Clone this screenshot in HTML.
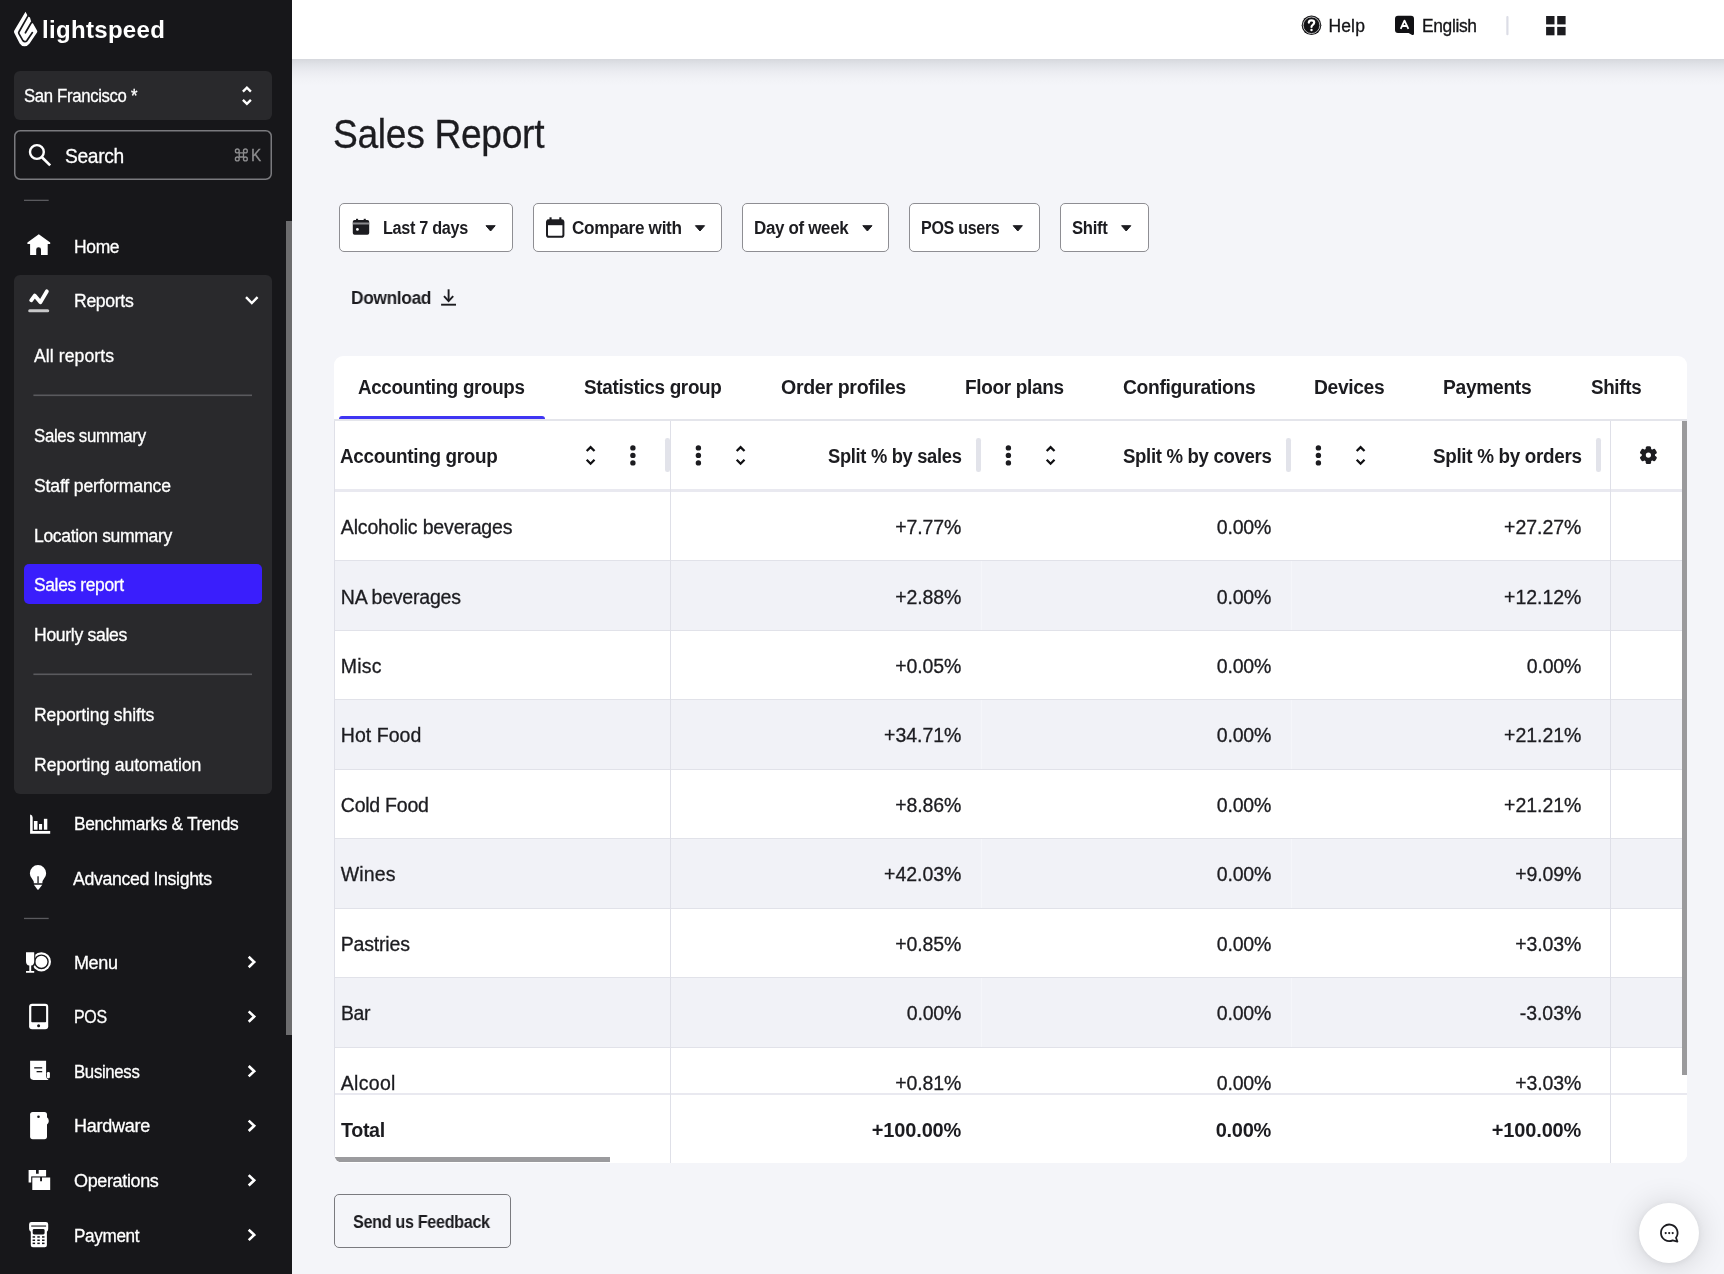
<!DOCTYPE html>
<html lang="en"><head><meta charset="utf-8"><title>Sales Report</title>
<style>
*{box-sizing:border-box;margin:0;padding:0}
html,body{width:1724px;height:1274px;overflow:hidden}
body{position:relative;background:#f4f5f9;font-family:"Liberation Sans",sans-serif;color:#1c1c20}
.a{position:absolute}
.t{position:absolute;transform-origin:0 50%;-webkit-text-stroke:0.3px currentColor;white-space:nowrap;line-height:24px;color:#fff;font-family:"Liberation Sans",sans-serif}
svg{position:absolute;overflow:visible}
#side{left:0;top:0;width:292px;height:1274px;background:#17171a}
.panel{background:#29292c;border-radius:6px}
.hr{height:1px;background:#56565b}
#topbar{left:292px;top:0;width:1432px;height:59px;background:#fff}
#topshadow{left:292px;top:59px;width:1432px;height:26px;background:linear-gradient(#d6d8dd,#e1e3e8 22%,#ebecf1 48%,#f1f2f6 75%,#f4f5f9)}
.btn{background:#fff;border:1px solid #8e8e93;border-radius:5px}
#card{left:334px;top:356px;width:1353px;height:807px;background:#fff;border-radius:9px;overflow:hidden}
.row{left:1px;width:1348px;height:70px;border-bottom:1px solid #e1e2e9}
.alt{background-color:#f1f2f7;background-image:linear-gradient(#f5f6fa,#f5f6fa),linear-gradient(#f5f6fa,#f5f6fa);background-size:1px 100%,1px 100%;background-position:646px 0,956px 0;background-repeat:no-repeat}
.vl{width:1px;background:#dfe0e8}
.rh{width:4.6px;height:34px;top:82.2px;background:#e2e3ea;border-radius:2.3px}
#texts{will-change:transform}

</style></head>
<body>
<div id="side" class="a">
  <div class="a panel" style="left:14px;top:71px;width:258px;height:49px"></div>
    <div class="a panel" style="left:14px;top:275px;width:258px;height:519px"></div>
  <div class="a" style="left:24px;top:564px;width:238px;height:40px;background:#3a1efc;border-radius:5px"></div>
  <div class="a" style="left:286px;top:221px;width:6px;height:814px;background:#6c6c6e"></div>
</div>
<div id="topshadow" class="a"></div>
<div id="topbar" class="a"></div>

<div class="a btn" style="left:339px;top:203px;width:174px;height:49px"></div>
<div class="a btn" style="left:533px;top:203px;width:189px;height:49px"></div>
<div class="a btn" style="left:742px;top:203px;width:147px;height:49px"></div>
<div class="a btn" style="left:909px;top:203px;width:131px;height:49px"></div>
<div class="a btn" style="left:1060px;top:203px;width:88.5px;height:49px"></div>

<div id="card" class="a">
  <!-- tab bar bottom border -->
  <div class="a" style="left:0;top:63px;width:1353px;height:2px;background:#e4e5eb"></div>
  <div class="a" style="left:5px;top:59.7px;width:206px;height:3.3px;background:#3f35f3;border-radius:3px 3px 0 0"></div>
  <!-- rows -->
  <div class="a row" style="top:136px;height:69px"></div>
  <div class="a row alt" style="top:205px;height:70px"></div>
  <div class="a row" style="top:275px;height:69px"></div>
  <div class="a row alt" style="top:344px;height:70px"></div>
  <div class="a row" style="top:414px;height:69px"></div>
  <div class="a row alt" style="top:483px;height:70px"></div>
  <div class="a row" style="top:553px;height:69px"></div>
  <div class="a row alt" style="top:622px;height:70px"></div>
  <div class="a row" style="top:692px;height:46px;border-bottom:none"></div>
  <!-- header bottom band -->
  <div class="a" style="left:0;top:133px;width:1349px;height:3px;background:#e9e9f0"></div>
  <!-- total row top border -->
  <div class="a" style="left:0;top:737px;width:1353px;height:2px;background:#e9e9f0"></div>
  <div class="a" style="left:0;top:739px;width:1353px;height:68px;background:#fff"></div>
  <!-- vertical lines -->
  <div class="a vl" style="left:0;top:65px;height:742px"></div>
  <div class="a vl" style="left:336px;top:65px;height:742px"></div>
  <div class="a vl" style="left:1276px;top:65px;height:742px"></div>
  <!-- resize handles -->
  <div class="a rh" style="left:331.2px"></div>
  <div class="a rh" style="left:642.2px"></div>
  <div class="a rh" style="left:952.2px"></div>
  <div class="a rh" style="left:1262.2px"></div>
  <!-- scrollbars -->
  <div class="a" style="left:1348px;top:65px;width:5px;height:654px;background:#9a9a9c"></div>
  <div class="a" style="left:1px;top:801.4px;width:275px;height:5px;background:#9b9b9e"></div>
</div>

<div class="a" style="left:334px;top:1194px;width:176.5px;height:54px;border:1px solid #7a7a7f;border-radius:5px"></div>
<div class="a" style="left:1639px;top:1203px;width:60px;height:60px;border-radius:30px;background:#fff;box-shadow:0 1px 6px 0 rgba(0,0,0,.06),0 2px 32px 0 rgba(0,0,0,.16)"></div>

<svg class="a" style="left:0;top:0" width="1724" height="1274" viewBox="0 0 1724 1274">
<!-- ===== logo flame ===== -->
<g id="flame">
<path fill="#fff" d="M25.5 11.7 L27.9 16.3 L30 17.6 L31.4 22.6 L33.2 23.8 L37 30.4 Q37.7 31.4 37 32.5 L29.6 43.6 Q27.7 46.3 24.5 46.3 Q21.3 46.3 19.7 43.6 L14.2 32.7 Q13.7 31.5 14.3 30.4 Z"/>
<path fill="none" stroke="#17171a" stroke-width="1.7" stroke-linecap="round" stroke-linejoin="round" d="M28.3 15.4 L18.9 32 Q18.4 32.8 18.9 33.6 L22.9 40.6 Q24.9 42.8 27 40.6 L32.4 32.6"/>
<path fill="none" stroke="#17171a" stroke-width="1.7" stroke-linecap="round" d="M31.5 22.3 L25.4 32.8"/>
</g>
<!-- dividers -->
<g fill="#5a5a5e">
<rect x="24" y="199.7" width="24.7" height="1.3"/>
<rect x="33.4" y="394.5" width="218.6" height="1.6"/>
<rect x="33.4" y="673.5" width="218.6" height="1.6"/>
<rect x="24" y="917.8" width="24.7" height="1.3"/>
</g>
<!-- ===== location up/down chevrons ===== -->
<g fill="none" stroke="#fff" stroke-width="2.4" stroke-linejoin="miter">
<path d="M242.9 91.6 L246.9 87.7 L250.9 91.6"/>
<path d="M242.9 99.9 L246.9 103.8 L250.9 99.9"/>
</g>
<!-- ===== search magnifier ===== -->
<rect x="14.75" y="130.75" width="256.5" height="48.5" rx="5.5" fill="none" stroke="#7a7a7e" stroke-width="1.5"/>
<g fill="none" stroke="#fff">
<circle cx="36.9" cy="152" r="6.9" stroke-width="2.4"/>
<path d="M41.9 157.3 L50.2 165.4" stroke-width="2.7"/>
</g>
<!-- command symbol -->
<g fill="none" stroke="#8e8e90" stroke-width="1.35">
<path d="M239.2 152.8 h4.3 v4.2 h-4.3 z"/>
<circle cx="237.3" cy="150.9" r="1.9"/><circle cx="245.4" cy="150.9" r="1.9"/><circle cx="237.3" cy="158.9" r="1.9"/><circle cx="245.4" cy="158.9" r="1.9"/>
</g>
<!-- ===== home ===== -->
<path fill="#fff" d="M38.8 234.2 L50.2 242.6 L50.2 244 L47.7 244 L47.7 254.9 L41 254.9 L41 249.6 a2.4 2.4 0 0 0 -4.8 0 L36.2 254.9 L30.1 254.9 L30.1 244 L27.4 244 L27.4 242.6 Z"/>
<!-- ===== reports ===== -->
<path fill="none" stroke="#fff" stroke-width="3.8" stroke-linecap="round" stroke-linejoin="round" d="M31.2 300.3 L34.7 295.6 L40.4 302.2 L46.9 291.3"/>
<rect x="28.2" y="309.2" width="21" height="3.1" rx="1.5" fill="#c8c8c9"/>
<path fill="none" stroke="#fff" stroke-width="2.4" d="M246 297.2 L251.8 303 L257.6 297.2"/>
<!-- ===== benchmarks ===== -->
<g fill="#fff">
<path d="M30.1 814.6 Q32.7 815 32.7 817.6 L32.7 830.9 L50.2 830.9 L50.2 833.7 L30.1 833.7 Z"/>
<rect x="33.9" y="821" width="3.6" height="8.7"/>
<rect x="39" y="824" width="3.1" height="5.7"/>
<rect x="43.9" y="818.8" width="3.4" height="10.9"/>
</g>
<!-- ===== bulb ===== -->
<g>
<path fill="#fff" d="M33.8 883.2 L33.8 881.8 Q33.4 880.6 32.2 879 A8.15 8.15 0 1 1 43.8 879 Q42.6 880.6 42.4 881.8 L42.4 883.2 Z"/>
<path fill="#fff" d="M33.9 884.8 L42.3 884.8 L38.6 889.5 Q38 890 37.4 889.5 Z"/>
<rect x="37.4" y="876.3" width="1.3" height="7" fill="#17171a"/>
</g>
<!-- ===== chevrons right ===== -->
<g fill="none" stroke="#fff" stroke-width="2.6">
<path d="M248.7 956.8 L254.2 962.0 L248.7 967.2"/>
<path d="M248.7 1011.4 L254.2 1016.6 L248.7 1021.8"/>
<path d="M248.7 1066.0 L254.2 1071.2 L248.7 1076.4"/>
<path d="M248.7 1120.6 L254.2 1125.8 L248.7 1131.0"/>
<path d="M248.7 1175.1 L254.2 1180.3 L248.7 1185.5"/>
<path d="M248.7 1229.7 L254.2 1234.9 L248.7 1240.1"/>
</g>
<!-- ===== menu (glass + plate) ===== -->
<g>
<circle cx="41.4" cy="961.8" r="9.6" fill="#fff"/>
<circle cx="41.4" cy="961.8" r="6.7" fill="none" stroke="#17171a" stroke-width="1.4"/>
<path fill="#17171a" d="M25 950 H35.3 V962 Q35.3 966.5 32 967.6 V974 H25 Z"/>
<path fill="#fff" d="M26 952.3 H34.2 V961.2 Q34.2 965.2 31.2 965.5 V971 H34.2 V972.8 H26 V971 H29.3 V965.5 Q26 965.2 26 961.2 Z"/>
</g>
<!-- ===== POS tablet ===== -->
<g>
<rect x="29.1" y="1003.8" width="19.1" height="25.4" rx="3" fill="#fff"/>
<rect x="31.3" y="1006" width="14.8" height="16.2" rx="0.8" fill="#17171a"/>
<circle cx="38.6" cy="1025.8" r="1.5" fill="#17171a"/>
</g>
<!-- ===== business ===== -->
<g>
<path fill="#fff" d="M30.1 1060.8 H46.1 V1076 Q46.1 1079 48.6 1079.9 H33.4 Q30.1 1079.9 30.1 1076.6 Z"/>
<rect x="46.9" y="1072" width="3" height="6.3" rx="1.2" fill="#fff"/>
<rect x="34.2" y="1067.2" width="8" height="1.3" fill="#17171a"/>
<rect x="36.6" y="1071" width="5.6" height="1.3" fill="#17171a"/>
</g>
<!-- ===== hardware ===== -->
<g>
<rect x="30.1" y="1112" width="16.9" height="27.2" rx="2.6" fill="#fff"/>
<path fill="#fff" d="M46.8 1117 Q48.8 1118.4 48.8 1121 Q48.8 1123.4 46.8 1124.8 Z"/>
<circle cx="38.5" cy="1116.8" r="1.3" fill="#17171a"/>
</g>
<!-- ===== operations ===== -->
<g>
<path fill="#fff" d="M28.6 1170.1 H36 V1173.8 H38.7 V1170.1 H46.1 V1182.4 H28.6 Z"/>
<rect x="31.2" y="1176.4" width="20.1" height="14.6" fill="#17171a"/>
<path fill="#fff" d="M32.3 1177.5 H40.1 V1181.3 H42 V1177.5 H50.2 V1189.9 H32.3 Z"/>
</g>
<!-- ===== payment ===== -->
<g>
<path fill="#fff" d="M31.4 1221.9 H45.9 Q48.2 1221.9 48.2 1224.2 V1229 Q48.2 1230.6 46.9 1231.8 V1245.2 Q46.9 1247.3 44.8 1247.3 H32.9 Q30.8 1247.3 30.8 1245.2 V1231.8 Q29.1 1230.6 29.1 1229 V1224.2 Q29.1 1221.9 31.4 1221.9 Z"/>
<rect x="31.2" y="1225.5" width="14.9" height="1.1" fill="#17171a"/>
<rect x="32.7" y="1229" width="11.9" height="5.4" rx="1.4" fill="#17171a"/>
<g fill="#17171a">
<rect x="32.6" y="1236.2" width="2.5" height="1.5"/><rect x="37.3" y="1236.2" width="2.5" height="1.5"/><rect x="42" y="1236.2" width="2.5" height="1.5"/>
<rect x="32.6" y="1239.5" width="2.5" height="1.5"/><rect x="37.3" y="1239.5" width="2.5" height="1.5"/><rect x="42" y="1239.5" width="2.5" height="1.5"/>
<rect x="32.6" y="1242.6" width="2.5" height="1.5"/><rect x="37.3" y="1242.6" width="2.5" height="1.5"/><rect x="42" y="1242.6" width="2.5" height="1.5"/>
</g>
</g>
<!-- ===== topbar: help ===== -->
<g>
<circle cx="1311.5" cy="25.3" r="9.8" fill="#111114"/>
<circle cx="1311.5" cy="25.3" r="8.3" fill="none" stroke="#fff" stroke-width="0.7"/>
<path fill="none" stroke="#fff" stroke-width="2.2" stroke-linecap="round" d="M1308.8 22.6 Q1308.9 20.3 1311.5 20.3 Q1314.2 20.3 1314.2 22.5 Q1314.2 23.9 1312.8 24.8 Q1311.5 25.7 1311.5 27"/>
<circle cx="1311.5" cy="30" r="1.2" fill="#fff"/>
</g>
<!-- ===== topbar: language ===== -->
<g>
<path fill="#111114" d="M1398 15.8 H1411 Q1414 15.8 1414 18.8 V33.4 Q1414 35.6 1412.2 34.9 L1408.6 33 H1398 Q1395 33 1395 30 V18.8 Q1395 15.8 1398 15.8 Z"/>
<path fill="none" stroke="#fff" stroke-width="1.8" stroke-linejoin="round" d="M1400.7 28.8 L1404.5 20.6 L1408.4 28.8 M1402 26 H1407"/>
</g>
<rect x="1506.3" y="16" width="2.2" height="19.2" rx="1" fill="#dcdde6"/>
<g fill="#1c1c20">
<rect x="1546.1" y="16" width="8.4" height="8.4"/><rect x="1557.2" y="16" width="8.4" height="8.4"/>
<rect x="1546.1" y="26.9" width="8.4" height="8.4"/><rect x="1557.2" y="26.9" width="8.4" height="8.4"/>
</g>
<!-- ===== filter: calendar filled ===== -->
<g>
<rect x="352.8" y="220" width="16.4" height="14.7" rx="1.8" fill="#1c1c20"/>
<rect x="356" y="218.8" width="2.1" height="3" fill="#1c1c20"/><rect x="363.7" y="218.8" width="2.1" height="3" fill="#1c1c20"/>
<rect x="352.8" y="222.5" width="16.4" height="2" fill="#8a8a8e"/>
<circle cx="357.4" cy="229.4" r="1.4" fill="#fff"/>
</g>
<!-- ===== filter: calendar outline ===== -->
<g>
<rect x="547" y="220.4" width="16.4" height="16.3" rx="1.8" fill="none" stroke="#1c1c20" stroke-width="2"/>
<rect x="547" y="219.6" width="16.4" height="5.6" fill="#1c1c20"/>
<rect x="549.5" y="217.3" width="2.1" height="4" fill="#1c1c20"/><rect x="559.3" y="217.3" width="2.1" height="4" fill="#1c1c20"/>
</g>
<!-- carets -->
<g fill="#1c1c20" stroke="#1c1c20" stroke-width="1" stroke-linejoin="round">
<path d="M486 225.7 H495.2 L490.6 231 Z"/>
<path d="M695.4 225.7 H704.6 L700 231 Z"/>
<path d="M862.8 225.7 H872 L867.4 231 Z"/>
<path d="M1013.2 225.7 H1022.4 L1017.8 231 Z"/>
<path d="M1121.6 225.7 H1130.8 L1126.2 231 Z"/>
</g>
<!-- download -->
<g fill="none" stroke="#1c1c20" stroke-width="1.9">
<path d="M441.1 304.7 H456"/>
<path d="M448.6 289.3 V301"/>
<path d="M444 296.2 L448.6 301.2 L453.2 296.2"/>
</g>
<!-- ===== table header icons ===== -->
<g fill="none" stroke="#111114" stroke-width="2.3">
<path d="M586.7 451 L590.6 447.1 L594.5 451 M586.7 459.8 L590.6 463.7 L594.5 459.8"/>
<path d="M736.7 451 L740.6 447.1 L744.5 451 M736.7 459.8 L740.6 463.7 L744.5 459.8"/>
<path d="M1046.7 451 L1050.6 447.1 L1054.5 451 M1046.7 459.8 L1050.6 463.7 L1054.5 459.8"/>
<path d="M1356.7 451 L1360.6 447.1 L1364.5 451 M1356.7 459.8 L1360.6 463.7 L1364.5 459.8"/>
</g>
<g fill="#1c1c20">
<circle cx="632.9" cy="447.9" r="2.7"/><circle cx="632.9" cy="455.4" r="2.7"/><circle cx="632.9" cy="462.9" r="2.7"/>
<circle cx="698.4" cy="447.9" r="2.7"/><circle cx="698.4" cy="455.4" r="2.7"/><circle cx="698.4" cy="462.9" r="2.7"/>
<circle cx="1008.4" cy="447.9" r="2.7"/><circle cx="1008.4" cy="455.4" r="2.7"/><circle cx="1008.4" cy="462.9" r="2.7"/>
<circle cx="1318.4" cy="447.9" r="2.7"/><circle cx="1318.4" cy="455.4" r="2.7"/><circle cx="1318.4" cy="462.9" r="2.7"/>
</g>
<!-- gear -->
<g transform="translate(1648.4 455.1)">
<g fill="#1c1c20">
<circle r="6.7"/>
<rect x="-2.7" y="-8.8" width="5.4" height="17.6" rx="1.5"/>
<rect x="-2.7" y="-8.8" width="5.4" height="17.6" rx="1.5" transform="rotate(60)"/>
<rect x="-2.7" y="-8.8" width="5.4" height="17.6" rx="1.5" transform="rotate(120)"/>
</g>
<circle r="2.6" fill="#fff"/>
</g>
<!-- chat -->
<g fill="none" stroke="#1c1c20" stroke-width="1.8">
<path d="M1676 1237.7 A8.3 8.3 0 1 0 1672.7 1240.4 L1677.4 1241.6 Z" stroke-linejoin="round"/>
</g>
<g fill="#1c1c20"><circle cx="1665.7" cy="1233.1" r="1.1"/><circle cx="1669.2" cy="1233.1" r="1.1"/><circle cx="1672.7" cy="1233.1" r="1.1"/></g>
</svg>


<div id="texts">
<span class="t" style="left:42.0px;top:17.5px;font-size:24px;font-weight:700;-webkit-text-stroke:0;letter-spacing:0.316px;">lightspeed</span>
<span class="t" style="left:24.0px;top:83.5px;font-size:18px;letter-spacing:-0.350px;transform:scaleX(0.9284);">San Francisco *</span>
<span class="t" style="left:64.9px;top:143.5px;font-size:21px;letter-spacing:-0.350px;transform:scaleX(0.9149);">Search</span>
<span class="t" style="left:250.6px;top:144.0px;font-size:16.6px;color:#8e8e90;letter-spacing:-0.350px;transform:scaleX(0.9207);">K</span>
<span class="t" style="left:73.9px;top:234.5px;font-size:18px;letter-spacing:-0.350px;transform:scaleX(0.9699);">Home</span>
<span class="t" style="left:73.9px;top:288.5px;font-size:18px;letter-spacing:-0.350px;transform:scaleX(0.9801);">Reports</span>
<span class="t" style="left:34.0px;top:343.5px;font-size:17.6px;letter-spacing:0.080px;">All reports</span>
<span class="t" style="left:34.0px;top:423.5px;font-size:17.6px;letter-spacing:-0.350px;transform:scaleX(0.9575);">Sales summary</span>
<span class="t" style="left:34.0px;top:473.5px;font-size:17.6px;letter-spacing:-0.160px;">Staff performance</span>
<span class="t" style="left:34.0px;top:523.5px;font-size:17.6px;letter-spacing:-0.350px;transform:scaleX(0.9985);">Location summary</span>
<span class="t" style="left:34.0px;top:572.7px;font-size:17.6px;letter-spacing:-0.350px;transform:scaleX(0.9898);">Sales report</span>
<span class="t" style="left:34.0px;top:622.7px;font-size:17.6px;letter-spacing:-0.325px;">Hourly sales</span>
<span class="t" style="left:34.0px;top:702.7px;font-size:17.6px;letter-spacing:-0.131px;">Reporting shifts</span>
<span class="t" style="left:34.0px;top:752.7px;font-size:17.6px;letter-spacing:-0.047px;">Reporting automation</span>
<span class="t" style="left:73.9px;top:811.5px;font-size:18px;letter-spacing:-0.350px;transform:scaleX(0.9640);">Benchmarks &amp; Trends</span>
<span class="t" style="left:73.3px;top:866.5px;font-size:18px;letter-spacing:-0.350px;transform:scaleX(0.9826);">Advanced Insights</span>
<span class="t" style="left:73.9px;top:950.5px;font-size:18px;letter-spacing:-0.301px;">Menu</span>
<span class="t" style="left:73.9px;top:1004.5px;font-size:18px;letter-spacing:-0.350px;transform:scaleX(0.8878);">POS</span>
<span class="t" style="left:73.9px;top:1060.0px;font-size:18px;letter-spacing:-0.350px;transform:scaleX(0.9325);">Business</span>
<span class="t" style="left:73.9px;top:1113.5px;font-size:18px;letter-spacing:-0.247px;">Hardware</span>
<span class="t" style="left:73.9px;top:1169.0px;font-size:18px;letter-spacing:-0.350px;transform:scaleX(0.9996);">Operations</span>
<span class="t" style="left:73.9px;top:1224.0px;font-size:18px;letter-spacing:-0.350px;transform:scaleX(0.9503);">Payment</span>
<span class="t" style="left:1328.4px;top:13.7px;font-size:17.5px;color:#141417;letter-spacing:0.175px;">Help</span>
<span class="t" style="left:1421.7px;top:13.7px;font-size:17.5px;color:#141417;letter-spacing:-0.350px;transform:scaleX(0.9945);">English</span>
<span class="t" style="left:332.9px;top:122.1px;font-size:40.7px;color:#1c1c20;letter-spacing:-0.350px;transform:scaleX(0.9140);">Sales Report</span>
<span class="t" style="left:383.0px;top:216.0px;font-size:18px;font-weight:700;-webkit-text-stroke:0;color:#1c1c20;letter-spacing:-0.350px;transform:scaleX(0.9019);">Last 7 days</span>
<span class="t" style="left:572.4px;top:216.0px;font-size:18px;font-weight:700;-webkit-text-stroke:0;color:#1c1c20;letter-spacing:-0.350px;transform:scaleX(0.9548);">Compare with</span>
<span class="t" style="left:754.0px;top:216.0px;font-size:18px;font-weight:700;-webkit-text-stroke:0;color:#1c1c20;letter-spacing:-0.350px;transform:scaleX(0.9419);">Day of week</span>
<span class="t" style="left:921.0px;top:216.0px;font-size:18px;font-weight:700;-webkit-text-stroke:0;color:#1c1c20;letter-spacing:-0.350px;transform:scaleX(0.8924);">POS users</span>
<span class="t" style="left:1072.0px;top:216.0px;font-size:18px;font-weight:700;-webkit-text-stroke:0;color:#1c1c20;letter-spacing:-0.350px;transform:scaleX(0.9268);">Shift</span>
<span class="t" style="left:350.8px;top:285.9px;font-size:18px;font-weight:700;-webkit-text-stroke:0;color:#1c1c20;letter-spacing:-0.350px;transform:scaleX(0.9625);">Download</span>
<span class="t" style="left:358.4px;top:375.0px;font-size:20px;font-weight:700;-webkit-text-stroke:0;color:#1c1c20;letter-spacing:-0.350px;transform:scaleX(0.9390);">Accounting groups</span>
<span class="t" style="left:583.7px;top:375.0px;font-size:20px;font-weight:700;-webkit-text-stroke:0;color:#1c1c20;letter-spacing:-0.350px;transform:scaleX(0.9450);">Statistics group</span>
<span class="t" style="left:781.2px;top:375.0px;font-size:20px;font-weight:700;-webkit-text-stroke:0;color:#1c1c20;letter-spacing:-0.350px;transform:scaleX(0.9796);">Order profiles</span>
<span class="t" style="left:965.0px;top:375.0px;font-size:20px;font-weight:700;-webkit-text-stroke:0;color:#1c1c20;letter-spacing:-0.350px;transform:scaleX(0.9491);">Floor plans</span>
<span class="t" style="left:1122.9px;top:375.0px;font-size:20px;font-weight:700;-webkit-text-stroke:0;color:#1c1c20;letter-spacing:-0.350px;transform:scaleX(0.9633);">Configurations</span>
<span class="t" style="left:1314.0px;top:375.0px;font-size:20px;font-weight:700;-webkit-text-stroke:0;color:#1c1c20;letter-spacing:-0.350px;transform:scaleX(0.9609);">Devices</span>
<span class="t" style="left:1443.0px;top:375.0px;font-size:20px;font-weight:700;-webkit-text-stroke:0;color:#1c1c20;letter-spacing:-0.350px;transform:scaleX(0.9632);">Payments</span>
<span class="t" style="left:1590.6px;top:375.0px;font-size:20px;font-weight:700;-webkit-text-stroke:0;color:#1c1c20;letter-spacing:-0.350px;transform:scaleX(0.9401);">Shifts</span>
<span class="t" style="left:340.3px;top:444.0px;font-size:20px;font-weight:700;-webkit-text-stroke:0;color:#1c1c20;letter-spacing:-0.350px;transform:scaleX(0.9452);">Accounting group</span>
<span class="t" style="left:828.0px;top:444.0px;font-size:20px;font-weight:700;-webkit-text-stroke:0;color:#1c1c20;letter-spacing:-0.350px;transform:scaleX(0.9172);">Split % by sales</span>
<span class="t" style="left:1123.4px;top:444.0px;font-size:20px;font-weight:700;-webkit-text-stroke:0;color:#1c1c20;letter-spacing:-0.350px;transform:scaleX(0.9302);">Split % by covers</span>
<span class="t" style="left:1433.3px;top:444.0px;font-size:20px;font-weight:700;-webkit-text-stroke:0;color:#1c1c20;letter-spacing:-0.350px;transform:scaleX(0.9437);">Split % by orders</span>
<span class="t" style="left:340.8px;top:514.7px;font-size:19.5px;color:#1c1c20;letter-spacing:-0.159px;">Alcoholic beverages</span>
<span class="t" style="left:895.3px;top:514.7px;font-size:19.5px;color:#1c1c20;letter-spacing:-0.143px;">+7.77%</span>
<span class="t" style="left:1216.8px;top:514.7px;font-size:19.5px;color:#1c1c20;letter-spacing:-0.199px;">0.00%</span>
<span class="t" style="left:1504.1px;top:514.7px;font-size:19.5px;color:#1c1c20;letter-spacing:-0.053px;">+27.27%</span>
<span class="t" style="left:340.8px;top:585.2px;font-size:19.5px;color:#1c1c20;letter-spacing:-0.219px;">NA beverages</span>
<span class="t" style="left:895.3px;top:585.2px;font-size:19.5px;color:#1c1c20;letter-spacing:-0.143px;">+2.88%</span>
<span class="t" style="left:1216.8px;top:585.2px;font-size:19.5px;color:#1c1c20;letter-spacing:-0.199px;">0.00%</span>
<span class="t" style="left:1504.1px;top:585.2px;font-size:19.5px;color:#1c1c20;letter-spacing:-0.053px;">+12.12%</span>
<span class="t" style="left:340.8px;top:653.7px;font-size:19.5px;color:#1c1c20;letter-spacing:0.181px;">Misc</span>
<span class="t" style="left:895.3px;top:653.7px;font-size:19.5px;color:#1c1c20;letter-spacing:-0.143px;">+0.05%</span>
<span class="t" style="left:1216.8px;top:653.7px;font-size:19.5px;color:#1c1c20;letter-spacing:-0.199px;">0.00%</span>
<span class="t" style="left:1526.8px;top:653.7px;font-size:19.5px;color:#1c1c20;letter-spacing:-0.199px;">0.00%</span>
<span class="t" style="left:340.8px;top:723.2px;font-size:19.5px;color:#1c1c20;letter-spacing:0.046px;">Hot Food</span>
<span class="t" style="left:884.1px;top:723.2px;font-size:19.5px;color:#1c1c20;letter-spacing:-0.053px;">+34.71%</span>
<span class="t" style="left:1216.8px;top:723.2px;font-size:19.5px;color:#1c1c20;letter-spacing:-0.199px;">0.00%</span>
<span class="t" style="left:1504.1px;top:723.2px;font-size:19.5px;color:#1c1c20;letter-spacing:-0.053px;">+21.21%</span>
<span class="t" style="left:340.8px;top:792.7px;font-size:19.5px;color:#1c1c20;letter-spacing:-0.240px;">Cold Food</span>
<span class="t" style="left:895.3px;top:792.7px;font-size:19.5px;color:#1c1c20;letter-spacing:-0.143px;">+8.86%</span>
<span class="t" style="left:1216.8px;top:792.7px;font-size:19.5px;color:#1c1c20;letter-spacing:-0.199px;">0.00%</span>
<span class="t" style="left:1504.1px;top:792.7px;font-size:19.5px;color:#1c1c20;letter-spacing:-0.053px;">+21.21%</span>
<span class="t" style="left:340.8px;top:862.2px;font-size:19.5px;color:#1c1c20;letter-spacing:0.103px;">Wines</span>
<span class="t" style="left:884.1px;top:862.2px;font-size:19.5px;color:#1c1c20;letter-spacing:-0.053px;">+42.03%</span>
<span class="t" style="left:1216.8px;top:862.2px;font-size:19.5px;color:#1c1c20;letter-spacing:-0.199px;">0.00%</span>
<span class="t" style="left:1515.3px;top:862.2px;font-size:19.5px;color:#1c1c20;letter-spacing:-0.143px;">+9.09%</span>
<span class="t" style="left:340.8px;top:931.7px;font-size:19.5px;color:#1c1c20;letter-spacing:-0.194px;">Pastries</span>
<span class="t" style="left:895.3px;top:931.7px;font-size:19.5px;color:#1c1c20;letter-spacing:-0.143px;">+0.85%</span>
<span class="t" style="left:1216.8px;top:931.7px;font-size:19.5px;color:#1c1c20;letter-spacing:-0.199px;">0.00%</span>
<span class="t" style="left:1515.3px;top:931.7px;font-size:19.5px;color:#1c1c20;letter-spacing:-0.143px;">+3.03%</span>
<span class="t" style="left:340.8px;top:1001.2px;font-size:19.5px;color:#1c1c20;letter-spacing:-0.350px;transform:scaleX(0.9922);">Bar</span>
<span class="t" style="left:906.8px;top:1001.2px;font-size:19.5px;color:#1c1c20;letter-spacing:-0.199px;">0.00%</span>
<span class="t" style="left:1216.8px;top:1001.2px;font-size:19.5px;color:#1c1c20;letter-spacing:-0.199px;">0.00%</span>
<span class="t" style="left:1519.8px;top:1001.2px;font-size:19.5px;color:#1c1c20;letter-spacing:-0.067px;">-3.03%</span>
<span class="t" style="left:340.8px;top:1070.7px;font-size:19.5px;color:#1c1c20;letter-spacing:0.289px;">Alcool</span>
<span class="t" style="left:895.3px;top:1070.7px;font-size:19.5px;color:#1c1c20;letter-spacing:-0.143px;">+0.81%</span>
<span class="t" style="left:1216.8px;top:1070.7px;font-size:19.5px;color:#1c1c20;letter-spacing:-0.199px;">0.00%</span>
<span class="t" style="left:1515.3px;top:1070.7px;font-size:19.5px;color:#1c1c20;letter-spacing:-0.143px;">+3.03%</span>
<span class="t" style="left:340.8px;top:1118.0px;font-size:20px;font-weight:700;-webkit-text-stroke:0;color:#1c1c20;letter-spacing:-0.350px;transform:scaleX(0.9845);">Total</span>
<span class="t" style="left:871.8px;top:1118.0px;font-size:20px;font-weight:700;-webkit-text-stroke:0;color:#1c1c20;letter-spacing:-0.153px;">+100.00%</span>
<span class="t" style="left:1215.7px;top:1118.0px;font-size:20px;font-weight:700;-webkit-text-stroke:0;color:#1c1c20;letter-spacing:-0.260px;">0.00%</span>
<span class="t" style="left:1491.8px;top:1118.0px;font-size:20px;font-weight:700;-webkit-text-stroke:0;color:#1c1c20;letter-spacing:-0.153px;">+100.00%</span>
<span class="t" style="left:353.0px;top:1209.9px;font-size:18px;font-weight:700;-webkit-text-stroke:0;color:#1c1c20;letter-spacing:-0.350px;transform:scaleX(0.8971);">Send us Feedback</span>
</div>
</body></html>
